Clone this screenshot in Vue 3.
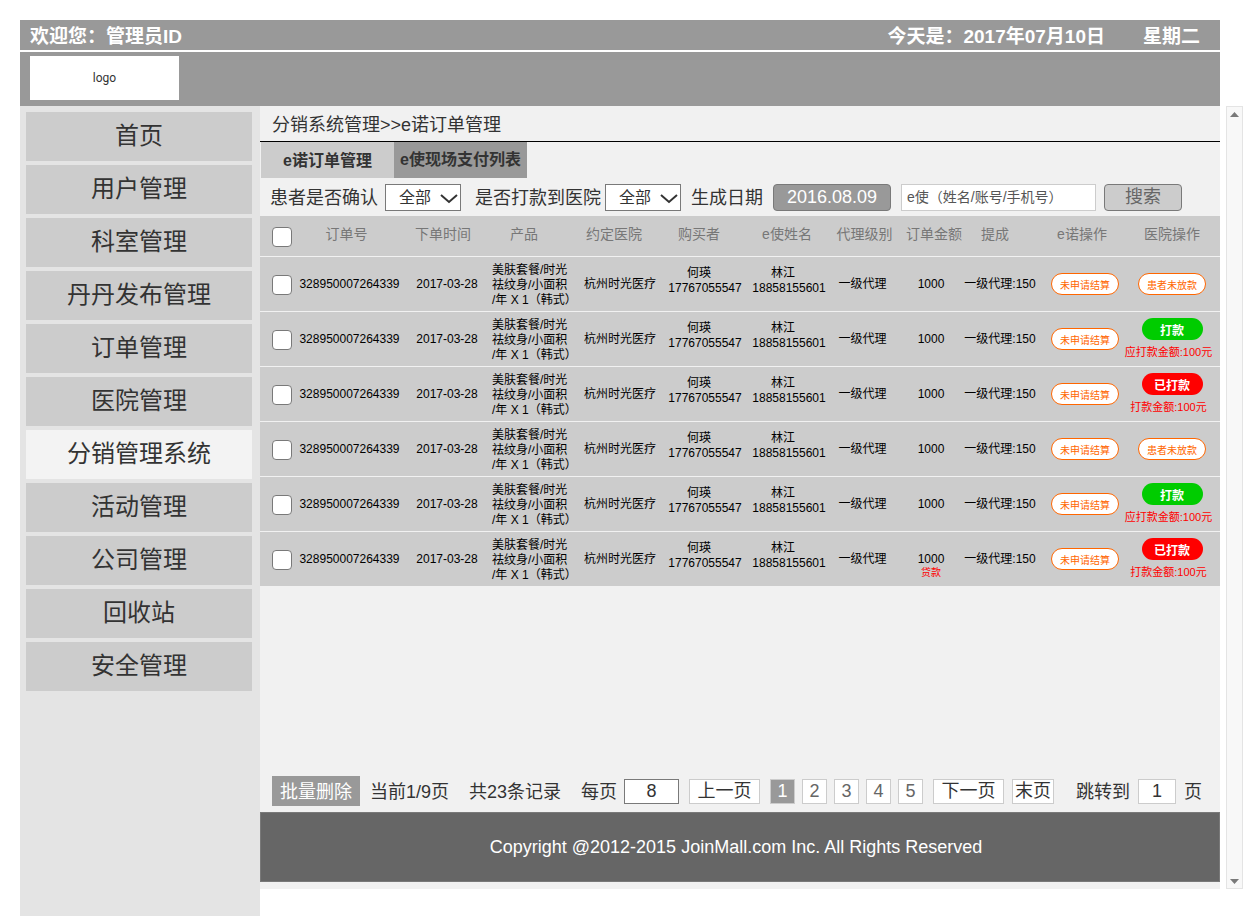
<script setup>
import { ref } from 'vue'

const menu = ['首页', '用户管理', '科室管理', '丹丹发布管理', '订单管理', '医院管理', '分销管理系统', '活动管理', '公司管理', '回收站', '安全管理']
const activeMenu = '分销管理系统'

const columns = [
  { key: 'order', title: '订单号' },
  { key: 'date', title: '下单时间' },
  { key: 'product', title: '产品' },
  { key: 'hospital', title: '约定医院' },
  { key: 'buyer', title: '购买者' },
  { key: 'envoy', title: 'e使姓名' },
  { key: 'level', title: '代理级别' },
  { key: 'amount', title: '订单金额' },
  { key: 'share', title: '提成' },
  { key: 'enuo', title: 'e诺操作' },
  { key: 'action', title: '医院操作' },
]

const states = ['wait', 'pay', 'paid', 'wait', 'pay', 'paid']
const rows = states.map((state, i) => ({ id: i + 1, state, note: i === 5 ? '贷款' : '' }))

const pages = [1, 2, 3, 4, 5]
const pageSize = ref('8')
const jumpTo = ref('1')
const keyword = ref('')
</script>

<template>
  <div class="page">
    <div class="topbar">
      <span>欢迎您：管理员ID</span>
      <span class="today"><span>今天是：2017年07月10日</span><span>星期二</span></span>
    </div>
    <header class="banner">
      <div class="logo">logo</div>
    </header>

    <div class="body">
      <nav class="sidebar">
        <a v-for="m in menu" :key="m" href="#" :class="{ active: m === activeMenu }">{{ m }}</a>
      </nav>

      <main class="main">
        <h1 class="crumb">分销系统管理&gt;&gt;e诺订单管理</h1>
        <div class="tabs">
          <button type="button">e诺订单管理</button>
          <button type="button" class="current">e使现场支付列表</button>
        </div>

        <form class="filters" @submit.prevent>
          <label for="confirmed">患者是否确认</label>
          <span class="select gap-7">
            <select id="confirmed"><option>全部</option></select>
            <svg viewBox="0 0 18 10" width="18" height="10"><path d="M1 1L9 8L17 1" /></svg>
          </span>
          <label for="paid" class="gap-14">是否打款到医院</label>
          <span class="select gap-4">
            <select id="paid"><option>全部</option></select>
            <svg viewBox="0 0 18 10" width="18" height="10"><path d="M1 1L9 8L17 1" /></svg>
          </span>
          <label for="created" class="gap-10">生成日期</label>
          <button id="created" type="button" class="date gap-10">2016.08.09</button>
          <input v-model="keyword" class="keyword gap-10" type="text" aria-label="e使" placeholder="e使（姓名/账号/手机号）" />
          <button type="submit" class="search gap-8">搜索</button>
        </form>

        <table class="orders">
          <colgroup>
            <col class="w-check" />
            <col v-for="c in columns" :key="c.key" :class="'w-' + c.key" />
          </colgroup>
          <thead>
            <tr>
              <th class="check"><input type="checkbox" aria-label="全选" /></th>
              <th v-for="c in columns" :key="c.key" :class="'h-' + c.key">{{ c.title }}</th>
            </tr>
          </thead>
          <tbody>
            <tr v-for="r in rows" :key="r.id">
              <td class="check"><input type="checkbox" :aria-label="'选择订单 ' + r.id" /></td>
              <td>328950007264339</td>
              <td>2017-03-28</td>
              <td class="product">美肤套餐/时光<br />祛纹身/小面积<br />/年 X 1（韩式）</td>
              <td>杭州时光医疗</td>
              <td class="person"><span>何瑛</span>17767055547</td>
              <td class="person"><span>林江</span>18858155601</td>
              <td class="level">一级代理</td>
              <td>
                <div class="amount"><span>1000</span><span v-if="r.note" class="note">{{ r.note }}</span></div>
              </td>
              <td class="share">一级代理:150</td>
              <td><button type="button" class="pill">未申请结算</button></td>
              <td>
                <div class="action">
                  <button v-if="r.state === 'wait'" type="button" class="pill">患者未放款</button>
                  <template v-else-if="r.state === 'pay'">
                    <button type="button" class="solid green">打款</button>
                    <span class="due">应打款金额:100元</span>
                  </template>
                  <template v-else>
                    <button type="button" class="solid red">已打款</button>
                    <span class="due">打款金额:100元</span>
                  </template>
                </div>
              </td>
            </tr>
          </tbody>
        </table>

        <div class="pager">
          <button type="button" class="remove">批量删除</button>
          <span class="gap-10">当前1/9页</span>
          <span class="gap-20">共23条记录</span>
          <label for="size" class="gap-20">每页</label>
          <input id="size" v-model="pageSize" class="size gap-7" type="text" />
          <button type="button" class="step gap-10">上一页</button>
          <div class="numbers gap-10">
            <button v-for="p in pages" :key="p" type="button" :class="{ on: p === 1 }">{{ p }}</button>
          </div>
          <button type="button" class="step gap-10">下一页</button>
          <button type="button" class="last gap-8">末页</button>
          <label for="jump" class="gap-22">跳转到</label>
          <input id="jump" v-model="jumpTo" class="jump gap-8" type="text" />
          <span class="gap-8">页</span>
        </div>

        <footer class="footer">Copyright @2012-2015 JoinMall.com Inc. All Rights Reserved</footer>
      </main>

      <div class="scroll" aria-hidden="true">
        <svg viewBox="0 0 9 5" width="9" height="5"><path d="M0 5L4.5 0L9 5Z" /></svg>
        <svg viewBox="0 0 9 5" width="9" height="5"><path d="M0 0L4.5 5L9 0Z" /></svg>
      </div>
    </div>
  </div>
</template>

<style>
body {
  background: #fff;
}
</style>

<style scoped>
.page,
.page button,
.page input,
.page select {
  font-family: "Liberation Sans", "Noto Sans CJK SC", sans-serif;
  box-sizing: border-box;
}
.page {
  padding: 20px 0 0 20px;
  color: #333;
  font-size: 18px;
}
.page *,
.page *::before {
  box-sizing: border-box;
}
.page button {
  margin: 0;
  padding: 0;
  border: 0;
  color: inherit;
  cursor: pointer;
  white-space: nowrap;
}
.topbar {
  display: flex;
  justify-content: space-between;
  align-items: center;
  height: 30px;
  margin: 0 23px 2px 0;
  padding: 0 20px 2px 10px;
  background: #999;
  color: #fff;
  font-size: 19px;
  font-weight: bold;
}
.today {
  display: flex;
  gap: 38px;
}
.banner {
  height: 54px;
  margin-right: 23px;
  padding: 4px 10px;
  background: #999;
}
.logo {
  display: flex;
  align-items: center;
  justify-content: center;
  width: 149px;
  height: 44px;
  background: #fff;
  font: 12px Roboto, sans-serif;
}
.body {
  display: flex;
  align-items: flex-start;
}
.sidebar {
  display: flex;
  flex: none;
  flex-direction: column;
  gap: 4px;
  width: 240px;
  min-height: calc(100vh - 106px);
  padding: 6px 8px 0 6px;
  background: #e4e4e4;
}
.sidebar a {
  height: 49px;
  background: #ccc;
  color: #333;
  font-size: 24px;
  line-height: 48px;
  text-align: center;
  text-decoration: none;
}
.sidebar a.active {
  background: #f3f3f3;
}
.main {
  display: flex;
  flex: 1;
  flex-direction: column;
  min-width: 0;
  min-height: calc(100vh - 133px);
  padding-bottom: 7px;
  background: #f1f1f1;
}
.crumb {
  height: 36px;
  margin: 0;
  padding-left: 12px;
  border-bottom: 1px solid #000;
  font-size: 18px;
  font-weight: normal;
  line-height: 38px;
}
.tabs {
  display: flex;
  padding-left: 1px;
}
.page .tabs button {
  width: 133px;
  height: 36px;
  padding-bottom: 2px;
  background: #ccc;
  font-size: 16px;
  font-weight: bold;
}
.page .tabs .current {
  padding-bottom: 4px;
  background: #999;
}
.filters {
  display: flex;
  align-items: center;
  height: 38px;
  padding-left: 10px;
  white-space: nowrap;
}
.filters label,
.pager label,
.pager span {
  padding-bottom: 2px;
}
.gap-4 { margin-left: 4px; }
.page .gap-7 { margin-left: 7px; }
.page .gap-8 { margin-left: 8px; }
.page .gap-10 { margin-left: 10px; }
.gap-14 { margin-left: 14px; }
.gap-20 { margin-left: 20px; }
.gap-22 { margin-left: 22px; }
.select {
  position: relative;
  display: flex;
}
.select select {
  width: 76px;
  height: 27px;
  padding: 0 0 0 13px;
  border: 1px solid #797979;
  border-radius: 0;
  background: #fff;
  color: #333;
  font-size: 16px;
  appearance: none;
}
.select svg {
  position: absolute;
  top: 10px;
  right: 3px;
  pointer-events: none;
}
.select path {
  fill: none;
  stroke: #333;
  stroke-width: 2;
}
.page .date,
.page .search {
  height: 27px;
  border: 1px solid #797979;
  border-radius: 4px;
  font-size: 18px;
  line-height: 24px;
}
.page .date {
  width: 118px;
  background: #999;
  color: #fff;
}
.page .search {
  width: 78px;
  background: #ccc;
  color: #666;
}
.keyword {
  width: 195px;
  height: 27px;
  padding: 0 5px;
  border: 1px solid #ccc;
  background: #fff;
  font-size: 14px;
}
.keyword::placeholder {
  color: #555;
  opacity: 1;
}
.orders {
  width: 100%;
  border-collapse: separate;
  border-spacing: 0;
  table-layout: fixed;
  background: #ccc;
  color: #000;
  font-size: 12px;
  line-height: 15px;
  text-align: center;
}
.w-check { width: 34px; }
.w-order { width: 111px; }
.w-date { width: 84px; }
.w-product { width: 90px; }
.w-hospital { width: 82px; }
.w-buyer { width: 88px; }
.w-envoy { width: 80px; }
.w-level { width: 71px; }
.w-amount { width: 62px; }
.w-share { width: 84px; }
.w-enuo { width: 78px; }
.w-action { width: 96px; }
.orders th,
.orders td {
  padding: 0;
  white-space: nowrap;
}
.orders th {
  height: 41px;
  padding-bottom: 4px;
  border-bottom: 1px solid #f1f1f1;
  color: #777;
  font-size: 14px;
  font-weight: normal;
}
.orders td {
  height: 55px;
  border-bottom: 1px solid #f1f1f1;
}
.orders .h-order,
.orders .h-enuo { padding-right: 6px; }
.orders .h-date { padding-right: 8px; }
.orders .h-product { padding-right: 20px; }
.orders .h-hospital,
.orders .h-buyer { padding-right: 12px; }
.orders .h-envoy { padding-right: 4px; }
.orders .h-amount { padding-left: 6px; }
.orders .h-share { padding-right: 18px; }
.orders .check {
  padding: 2px 0 0 12px;
  text-align: left;
}
.check input {
  display: block;
  width: 20px;
  height: 20px;
  margin: 0;
  border: 1px solid #797979;
  border-radius: 4px;
  background: #fff;
  appearance: none;
}
.orders .product {
  padding: 2px 0 0 3px;
  text-align: left;
}
.orders .person {
  padding-bottom: 6px;
}
.person span {
  display: block;
  padding-right: 12px;
}
.orders .level {
  padding-right: 4px;
}
.orders .share {
  padding-right: 8px;
}
.amount {
  display: grid;
  grid-template-rows: 14px 14px 14px;
  line-height: 14px;
}
.amount span {
  grid-row: 2;
}
.amount .note {
  grid-row: 3;
  color: #f00;
  font-size: 10px;
}
.page .pill {
  display: block;
  width: 68px;
  height: 22px;
  margin: 0 auto;
  border: 1px solid #f60;
  border-radius: 11px;
  background: #fff;
  color: #f60;
  font-size: 10px;
}
.action {
  display: flex;
  flex-direction: column;
  align-items: center;
  gap: 4px;
}
.page .solid {
  width: 61px;
  height: 22px;
  border-radius: 11px;
  color: #fff;
  font-size: 12px;
  font-weight: bold;
}
.page .green { background: #0c0; }
.page .red { background: #f00; }
.due {
  padding-right: 7px;
  color: #f00;
  font-size: 11px;
  line-height: 16px;
}
.pager {
  display: flex;
  align-items: center;
  height: 30px;
  margin: auto 0 6px;
  padding-left: 12px;
  white-space: nowrap;
}
.page .remove {
  width: 88px;
  height: 30px;
  padding-bottom: 2px;
  background: #999;
  color: #fff;
  font-size: 18px;
}
.pager input,
.page .step,
.page .last,
.page .numbers button {
  height: 25px;
  padding: 0;
  border: 1px solid #ccc;
  background: #fff;
  color: #333;
  font-size: 18px;
  line-height: 23px;
  text-align: center;
}
.pager .size {
  width: 55px;
  border-color: #797979;
}
.pager .jump {
  width: 38px;
}
.page .step {
  width: 71px;
}
.page .last {
  width: 42px;
}
.numbers {
  display: flex;
  gap: 7px;
}
.page .numbers button {
  width: 25px;
  color: #666;
}
.page .numbers .on {
  background: #999;
  color: #fff;
}
.footer {
  height: 70px;
  padding-right: 8px;
  border: 1px solid #797979;
  background: #666;
  color: #fff;
  line-height: 68px;
  text-align: center;
}
.scroll {
  display: flex;
  flex: none;
  flex-direction: column;
  align-items: center;
  align-self: flex-start;
  justify-content: space-between;
  width: 17px;
  height: calc(100vh - 133px);
  margin-left: 6px;
  padding: 5px 0 4px;
  border: 1px solid #e4e4e4;
  background: #f8f8f8;
}
.scroll path {
  fill: #797979;
}
</style>
